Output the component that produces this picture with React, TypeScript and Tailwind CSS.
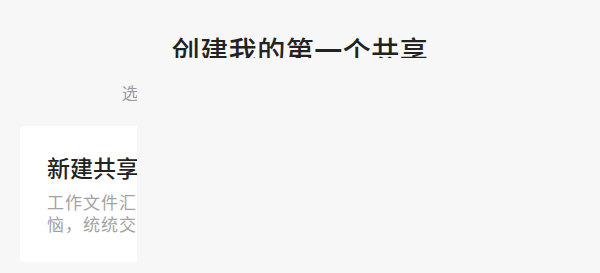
const font = { fontFamily: '"Noto Sans CJK SC", "Noto Sans", sans-serif' };

const App = () => {
  return (
    <div className="w-[600px] h-[273px] bg-[#f7f7f7] overflow-hidden" style={font}>
      <div className="h-[58px] overflow-hidden pt-[30px]">
        <h1 className="text-center text-[28px] leading-[40px] font-medium text-[#222] tracking-[0.5px]">
          创建我的第一个共享
        </h1>
      </div>
      <div className="w-[137px] overflow-hidden">
        <p className="whitespace-nowrap pl-[122px] mt-[22px] text-[16px] leading-[24px] text-[#999]">
          选择一种方式，开始你的共享
        </p>
        <div className="ml-[20px] mt-[22px] w-[270px] h-[136px] bg-white rounded-sm px-[27px] pt-[26px]">
          <h2 className="whitespace-nowrap text-[23px] leading-[30px] font-medium text-[#222]">新建共享</h2>
          <p className="mt-[9px] text-[17px] leading-[22px] tracking-[1px] text-[#a3a3a3]">
            工作文件汇总太麻烦？别烦恼，统统交给共享空间
          </p>
        </div>
      </div>
    </div>
  );
};

export default App;
